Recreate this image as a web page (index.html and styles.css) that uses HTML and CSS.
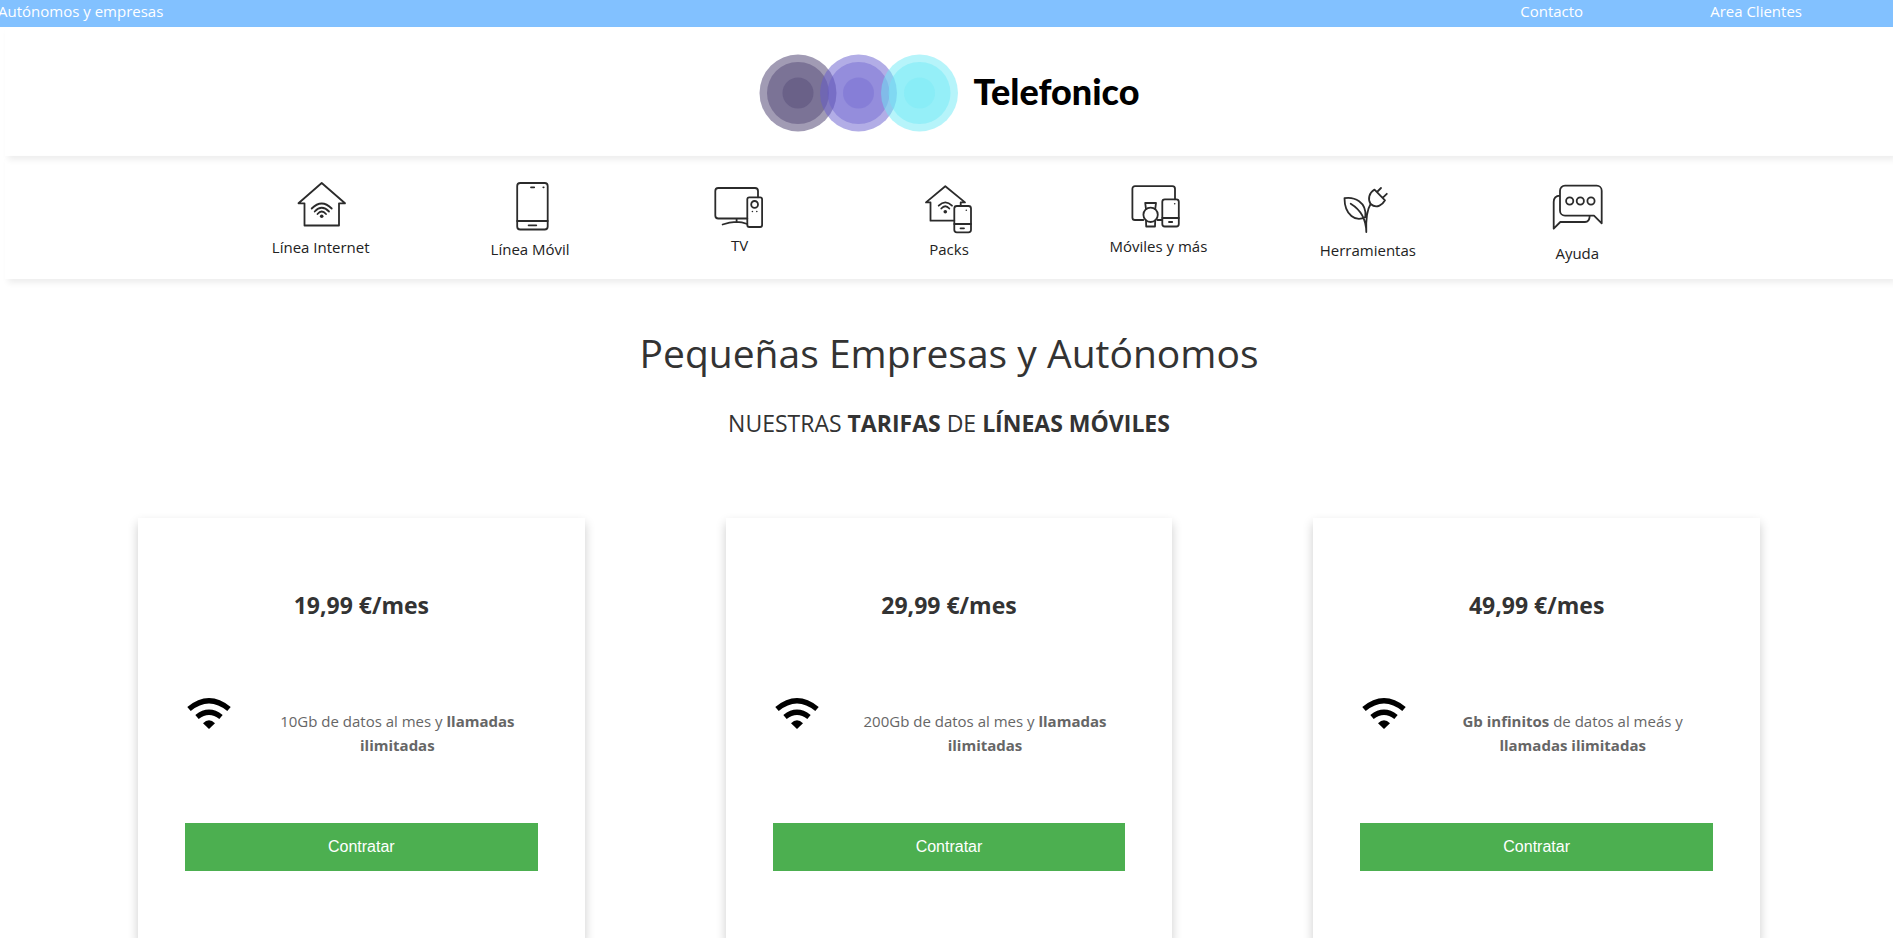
FILE: index.html
```html
<!DOCTYPE html>
<html lang="es">
<head>
<meta charset="utf-8">
<meta name="viewport" content="width=device-width, initial-scale=1">
<title>Telefonico - Pequeñas Empresas y Autónomos</title>
<link rel="stylesheet" href="styles.css">
</head>
<body>
<div class="topbar">
  <a href="#">Autónomos y empresas</a>
  <div class="topbar-right">
    <a href="#">Contacto</a>
    <a href="#">Area Clientes</a>
  </div>
</div>

<header class="header">
  <a class="logo" href="#">
    <svg width="200" height="80" viewBox="0 0 200 80" aria-hidden="true">
      <g fill="#433769"><circle cx="39" cy="40" r="38.5" opacity=".5"/><circle cx="39" cy="40" r="31" opacity=".4"/><circle cx="39" cy="40" r="15.5" opacity=".3"/></g>
      <g fill="#665cce"><circle cx="99.5" cy="40" r="38.5" opacity=".5"/><circle cx="99.5" cy="40" r="31" opacity=".4"/><circle cx="99.5" cy="40" r="15.5" opacity=".3"/></g>
      <g fill="#6de9f6"><circle cx="160.5" cy="40" r="38.5" opacity=".5"/><circle cx="160.5" cy="40" r="31" opacity=".45"/><circle cx="160.5" cy="40" r="15.5" opacity=".3"/></g>
    </svg>
    <span>Telefonico</span>
  </a>
</header>

<nav class="menu">
  <a href="#">
    <svg width="56" height="59" viewBox="0 0 56 59" aria-hidden="true">
      <path d="M11.5 27.3H5.5L28.7 7 52 27.3H46V49.5H11.5Z"/>
      <path d="M18.7 32.5Q28.7 22.5 38.7 32.5M21.7 35.5Q28.7 28 36 35.5M24.5 38Q28.7 33 33 38"/>
      <circle class="solid" cx="28.7" cy="40.2" r="1.8"/>
    </svg>
    <span>Línea Internet</span>
  </a>
  <a href="#">
    <svg width="56" height="61" viewBox="0 0 56 61" aria-hidden="true">
      <rect x="15.2" y="7" width="30.5" height="46.5" rx="3"/>
      <path d="M15.2 45H45.7M26.6 49.3H34.3M29 11.3H32.2M41.3 11.3H41.7"/>
    </svg>
    <span>Línea Móvil</span>
  </a>
  <a href="#">
    <svg width="56" height="57" viewBox="0 0 56 57" aria-hidden="true">
      <path d="M35.3 42.5H6.3A3 3 0 0 1 3.3 39.5V15A3 3 0 0 1 6.3 12H43A3 3 0 0 1 46 15V21.3M24.6 42.5V46M10.6 48.5Q24 43.5 35.3 48"/>
      <rect x="35.3" y="21.3" width="14.8" height="29.7" rx="2"/>
      <circle cx="42.6" cy="28.4" r="3.4"/>
      <circle class="solid" cx="40.4" cy="35.5" r=".8"/><circle class="solid" cx="44.8" cy="35.5" r=".8"/>
    </svg>
    <span>TV</span>
  </a>
  <a href="#">
    <svg width="56" height="61" viewBox="0 0 56 61" aria-hidden="true">
      <path d="M33.3 44.7H9.5V26.4H5L24.3 10.3 44 26.4H39.7V30M17.7 29.7Q24.3 23 31 29.7M20.3 32.5Q24.3 28 28.3 32.5"/>
      <circle class="solid" cx="24.3" cy="35.8" r="1.8"/>
      <rect x="33.3" y="30" width="16.7" height="26.3" rx="2.5"/>
      <path d="M33.3 48H50M39.5 52.3H43"/>
      <circle class="solid" cx="45.3" cy="34.3" r=".8"/>
    </svg>
    <span>Packs</span>
  </a>
  <a href="#">
    <svg width="56" height="58" viewBox="0 0 56 58" aria-hidden="true">
      <path d="M13.3 44H5A2.6 2.6 0 0 1 2.4 41.4V12.8A2.6 2.6 0 0 1 5 10.2H42.4A2.6 2.6 0 0 1 45 12.8V23.3M27.5 44H32.3"/>
      <rect x="32.3" y="23.3" width="16.5" height="27.2" rx="2.5"/>
      <path d="M32.3 42H48.8M39 46H42.2"/>
      <circle class="solid" cx="44.7" cy="27.7" r=".8"/>
      <circle cx="20.6" cy="38.8" r="7.2"/>
      <path d="M16 33.2L15.2 27H26L25.2 33.2M16 44.4L16.2 50.5H25L25.2 44.4"/>
    </svg>
    <span>Móviles y más</span>
  </a>
  <a href="#">
    <svg width="56" height="62" viewBox="0 0 56 62" aria-hidden="true">
      <path d="M4.5 22.2C14 20.5 27 26 25.4 41C16 46.5 4.5 39 4.5 22.2ZM10.7 27.7Q26 37 26.3 56Q25.5 36 30.6 28"/>
      <path d="M34.5 13.6L45 24.3C43 28 37 33.5 30.6 28C27.5 23 29 17 34.5 13.6ZM37 16L41 12M42.6 21.8L46.8 17.8"/>
    </svg>
    <span>Herramientas</span>
  </a>
  <a href="#">
    <svg width="56" height="65" viewBox="0 0 56 65" aria-hidden="true">
      <path d="M16 9.7H47.7A5 5 0 0 1 52.7 14.7V47.3L45 39.7H16A5 5 0 0 1 11 34.7V14.7A5 5 0 0 1 16 9.7ZM11 19.7Q4.7 20 4.7 26V52.7L11.3 46H36Q40.5 46 40.7 40"/>
      <circle cx="20.7" cy="25" r="3.6"/><circle cx="31.3" cy="25" r="3.6"/><circle cx="42" cy="25" r="3.6"/>
    </svg>
    <span>Ayuda</span>
  </a>
</nav>

<main class="content">
  <h1>Pequeñas Empresas y Autónomos</h1>
  <h2>NUESTRAS <strong>TARIFAS</strong> DE <strong>LÍNEAS MÓVILES</strong></h2>
  <div class="plans">
    <article class="plan">
      <h3>19,99 €/mes</h3>
      <div class="plan-info">
        <svg width="48" height="48" viewBox="0 0 48 48" aria-hidden="true"><path class="wave" d="M4 19Q24 2.5 44 19M12 27Q24 17.5 36 27"/><path d="M18 33.2Q24 27.500 30 33.2L24 39Z"/></svg>
        <p>10Gb de datos al mes y <strong>llamadas ilimitadas</strong></p>
      </div>
      <button type="button">Contratar</button>
    </article>
    <article class="plan">
      <h3>29,99 €/mes</h3>
      <div class="plan-info">
        <svg width="48" height="48" viewBox="0 0 48 48" aria-hidden="true"><path class="wave" d="M4 19Q24 2.5 44 19M12 27Q24 17.5 36 27"/><path d="M18 33.2Q24 27.500 30 33.2L24 39Z"/></svg>
        <p>200Gb de datos al mes y <strong>llamadas ilimitadas</strong></p>
      </div>
      <button type="button">Contratar</button>
    </article>
    <article class="plan">
      <h3>49,99 €/mes</h3>
      <div class="plan-info">
        <svg width="48" height="48" viewBox="0 0 48 48" aria-hidden="true"><path class="wave" d="M4 19Q24 2.5 44 19M12 27Q24 17.5 36 27"/><path d="M18 33.2Q24 27.500 30 33.2L24 39Z"/></svg>
        <p><strong>Gb infinitos</strong> de datos al meás y <strong>llamadas ilimitadas</strong></p>
      </div>
      <button type="button">Contratar</button>
    </article>
  </div>
</main>
</body>
</html>
```

FILE: styles.css
```css
* {
  box-sizing: border-box;
}

html {
  overflow-x: hidden;
  scrollbar-width: none;
}

body {
  margin: 0;
  background: #fff;
  color: #666;
  font-family: "Segoe UI", "Open Sans", "Noto Sans", sans-serif;
  font-size: 15px;
  line-height: 24px;
}

a {
  color: inherit;
  text-decoration: none;
}

h1,
h2,
h3,
p {
  margin: 0;
  color: #333;
  font-weight: 400;
}

.topbar {
  display: flex;
  justify-content: space-between;
  margin-left: -2px;
  padding: 0 91px 5px 0;
  background: #82c1ff;
  color: #fff;
  line-height: 22px;
}

.topbar-right {
  display: flex;
  gap: 127px;
}

.header,
.menu {
  margin-left: 5px;
  box-shadow: 3px 4px 6px rgba(0, 0, 0, 0.07);
}

.header {
  display: flex;
  justify-content: center;
  padding: 26px 0 23px;
}

.logo {
  display: flex;
  align-items: center;
  gap: 15px;
  color: #000;
  font-family: Lato, sans-serif;
  font-size: 36px;
  font-weight: 900;
}

.logo span {
  padding-bottom: 4px;
}

.menu {
  display: grid;
  grid-template-columns: repeat(7, 1fr);
  padding: 20px 211px 14px;
  color: #222;
}

.menu a {
  display: flex;
  flex-direction: column;
  align-items: center;
}

.menu svg {
  fill: none;
  stroke: #2b2b2b;
  stroke-width: 1.8;
  stroke-linecap: round;
  stroke-linejoin: round;
}

.menu .solid {
  fill: #2b2b2b;
  stroke: none;
}

.content {
  margin-left: 5px;
  padding-top: 48px;
  text-align: center;
}

h1 {
  font-size: 39px;
  line-height: 52px;
}

h2 {
  margin-top: 27px;
  font-size: 23px;
  line-height: 34px;
}

.plans {
  display: grid;
  grid-template-columns: repeat(3, 1fr);
  gap: 141px;
  padding: 78px 133px 70px;
}

.plan {
  padding: 70px 47px;
  box-shadow: 0 5px 10px rgba(0, 0, 0, 0.2);
}

.plan h3 {
  font-size: 23px;
  font-weight: 700;
  line-height: 34px;
}

.plan-info {
  display: grid;
  grid-template-columns: 48px 1fr;
  gap: 24px;
  margin: 68px 0 66px;
}

.plan-info p {
  padding-top: 19px;
  color: #666;
}

.plan-info .wave {
  fill: none;
  stroke: #000;
  stroke-width: 5.4;
}

.plan button {
  width: 100%;
  padding: 12px 32px;
  border: 0;
  background: #4caf50;
  color: #fff;
  font-family: "Liberation Sans", Arial, sans-serif;
  font-size: 16px;
  line-height: 24px;
}
```
